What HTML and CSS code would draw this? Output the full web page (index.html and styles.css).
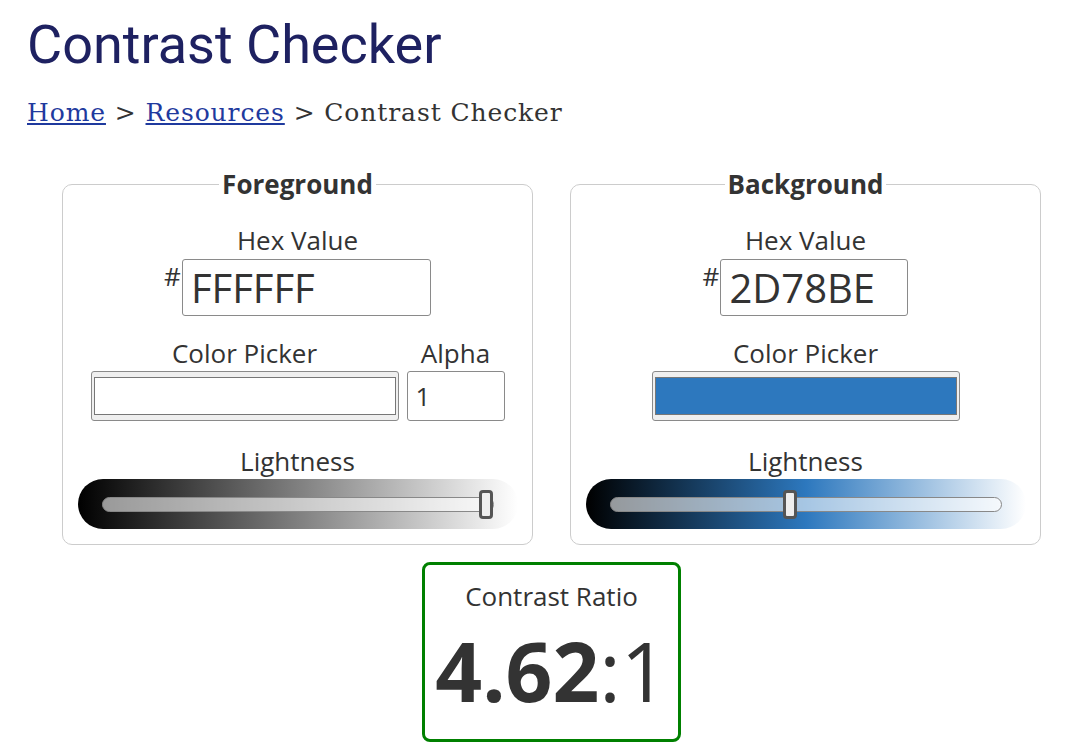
FILE: index.html
```html
<!DOCTYPE html>
<html lang="en">
<head>
<meta charset="utf-8">
<title>Contrast Checker</title>
<link rel="stylesheet" href="styles.css">
</head>
<body>
<main class="page">
  <h1 class="page-title">Contrast Checker</h1>
  <nav class="breadcrumb"><a href="#">Home</a> &gt; <a href="#">Resources</a> &gt; Contrast Checker</nav>

  <div class="checker">
    <div class="panels">
      <fieldset class="panel">
        <legend class="panel-title">Foreground</legend>
        <div class="panel-body">
          <div class="field">
            <label class="field-label">Hex Value</label>
            <div class="hex-group">
              <span class="hash">#</span>
              <input class="hex-input hex-input--wide" type="text" value="FFFFFF">
            </div>
          </div>
          <div class="picker-row">
            <div class="field">
              <label class="field-label">Color Picker</label>
              <div class="swatch"><div class="swatch-fill swatch-fill--white"></div></div>
            </div>
            <div class="field">
              <label class="field-label">Alpha</label>
              <input class="alpha-input" type="text" value="1">
            </div>
          </div>
          <div class="field field--lightness">
            <label class="field-label">Lightness</label>
            <div class="slider slider--gray">
              <input class="slider-input" type="range" min="0" max="100" value="100">
            </div>
          </div>
        </div>
      </fieldset>

      <fieldset class="panel">
        <legend class="panel-title">Background</legend>
        <div class="panel-body">
          <div class="field">
            <label class="field-label">Hex Value</label>
            <div class="hex-group">
              <span class="hash">#</span>
              <input class="hex-input hex-input--narrow" type="text" value="2D78BE">
            </div>
          </div>
          <div class="picker-row">
            <div class="field">
              <label class="field-label">Color Picker</label>
              <div class="swatch"><div class="swatch-fill swatch-fill--blue"></div></div>
            </div>
          </div>
          <div class="field field--lightness">
            <label class="field-label">Lightness</label>
            <div class="slider slider--blue">
              <input class="slider-input" type="range" min="0" max="100" value="46">
            </div>
          </div>
        </div>
      </fieldset>
    </div>

    <section class="result">
      <div class="result-label">Contrast Ratio</div>
      <div class="result-value"><strong class="result-num">4.62</strong>:1</div>
    </section>
  </div>
</main>
</body>
</html>
```

FILE: styles.css
```css
html, body {
  margin: 0;
  padding: 0;
  background: #fff;
}

.page {
  padding: 0 0 0 27px;
  font-family: "Open Sans", "Noto Sans", sans-serif;
  color: #333;
}

.page-title {
  margin: 13px 0 0;
  font-family: Roboto, "Liberation Sans", sans-serif;
  font-weight: 400;
  font-size: 54px;
  color: #1e2161;
  line-height: normal;
}

.breadcrumb {
  margin-top: 22px;
  font-family: "DejaVu Serif", "Liberation Serif", serif;
  font-size: 25px;
  letter-spacing: 0.9px;
  color: #333;
  line-height: 29px;
}

.breadcrumb a {
  color: #1f3a9e;
  text-decoration: underline;
}

.checker {
  margin: 39px 0 0 35px;
  width: 979px;
  display: flex;
  flex-direction: column;
  align-items: center;
}

.panels {
  display: flex;
  gap: 37px;
}

.panel {
  width: 471px;
  box-sizing: border-box;
  margin: 0;
  padding: 0 15px 15px;
  border: 1px solid #ccc;
  border-radius: 10px;
  min-width: 0;
}

.panel-title {
  margin: 0 auto;
  padding: 0 3px;
  font-size: 26px;
  font-weight: 700;
  color: #333;
}

.panel-body {
  padding-top: 21px;
  display: flex;
  flex-direction: column;
  align-items: center;
}

.field {
  display: flex;
  flex-direction: column;
  align-items: center;
}

.field-label {
  font-size: 26px;
  color: #333;
  line-height: 35px;
}

.hex-group {
  margin-top: 1px;
  display: flex;
  align-items: flex-start;
}

.hash {
  font-size: 26px;
  line-height: 35px;
  margin-right: 1px;
  color: #333;
}

.hex-input {
  height: 57px;
  box-sizing: border-box;
  margin: 0;
  padding: 0 8px;
  border: 1px solid #8a8a8a;
  border-radius: 3px;
  font-family: "Open Sans", sans-serif;
  font-size: 40px;
  color: #333;
  background: #fff;
  outline: none;
}

.hex-input--wide {
  width: 249px;
}

.hex-input--narrow {
  width: 188px;
}

.picker-row {
  margin-top: 20px;
  display: flex;
  gap: 8px;
}

.swatch {
  width: 308px;
  height: 50px;
  box-sizing: border-box;
  padding: 5px 2px;
  background: #efefef;
  border: 1px solid #8a8a8a;
  border-radius: 3px;
}

.swatch-fill {
  height: 100%;
  box-sizing: border-box;
  border: 1px solid #777;
}

.swatch-fill--white {
  background: #fff;
}

.swatch-fill--blue {
  background: #2d78be;
}

.alpha-input {
  width: 98px;
  height: 50px;
  box-sizing: border-box;
  margin: 0;
  padding: 0 8px;
  border: 1px solid #8a8a8a;
  border-radius: 3px;
  font-family: "Open Sans", sans-serif;
  font-size: 26px;
  color: #333;
  background: #fff;
  outline: none;
}

.field--lightness {
  margin-top: 23px;
}

.slider {
  width: 440px;
  height: 50px;
  box-sizing: border-box;
  padding: 0 24px;
  border-radius: 25px;
  display: flex;
  align-items: center;
}

.slider--gray {
  background: linear-gradient(to right, #000, #fff);
}

.slider--blue {
  background: linear-gradient(to right, #000, #2d78be, #fff);
}

.slider-input {
  -webkit-appearance: none;
  appearance: none;
  width: 100%;
  height: 29px;
  margin: 0;
  background: transparent;
}

.slider-input::-webkit-slider-runnable-track {
  height: 15px;
  box-sizing: border-box;
  background: rgba(255, 255, 255, 0.58);
  border: 1px solid #888;
  border-radius: 8px;
}

.slider-input::-webkit-slider-thumb {
  -webkit-appearance: none;
  appearance: none;
  width: 14px;
  height: 29px;
  box-sizing: border-box;
  margin-top: -8px;
  background: #eee;
  border: 3px solid #555;
  border-radius: 4px;
}

.result {
  margin-top: 17px;
  width: 259px;
  box-sizing: border-box;
  padding: 14px 0 13px;
  border: 3px solid #008000;
  border-radius: 8px;
  text-align: center;
}

.result-label {
  font-size: 26px;
  line-height: 35px;
  color: #333;
}

.result-value {
  font-size: 82px;
  line-height: 112px;
  color: #333;
  font-weight: 400;
}

.result-num {
  font-weight: 700;
}
```
